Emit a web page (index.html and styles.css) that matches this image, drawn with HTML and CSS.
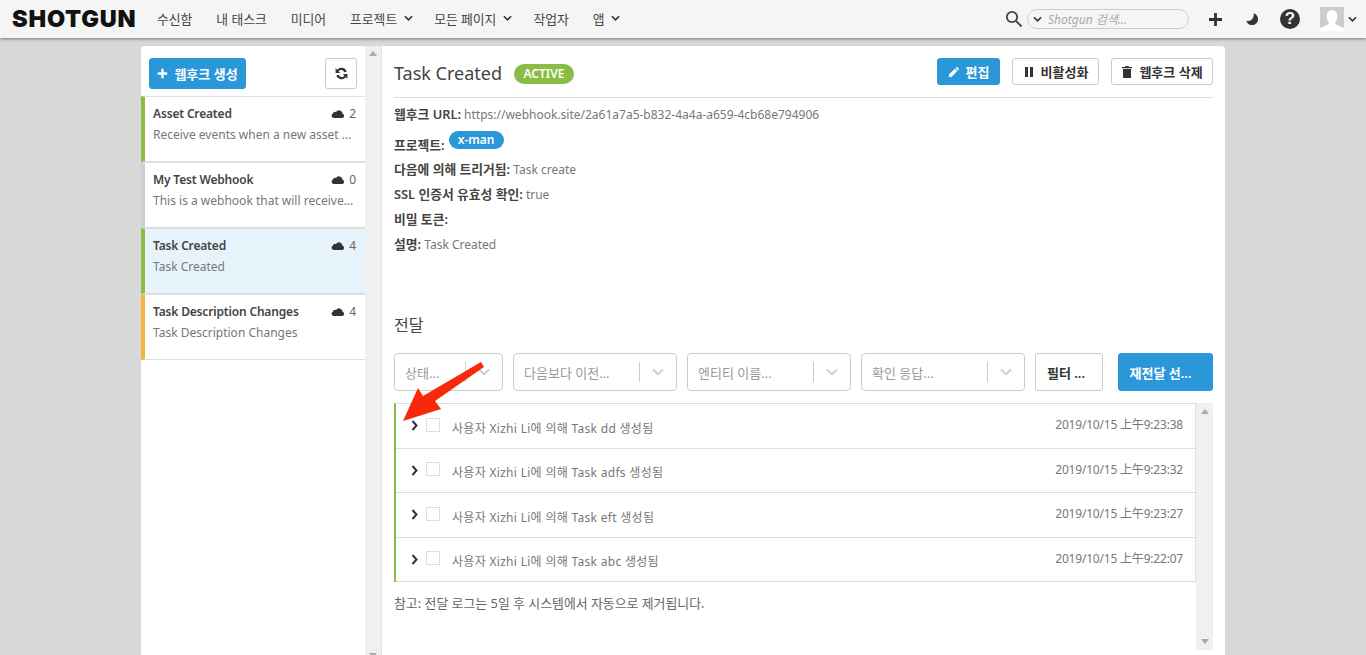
FILE: index.html
```html
<!DOCTYPE html>
<html lang="ko">
<head>
    <meta charset="UTF-8">
    <meta name="viewport" content="width=device-width, initial-scale=1.0">
    <title>Webhooks</title>
    <link rel="stylesheet" href="styles.css">
</head>
<body>
    <header class="topbar">
        <div class="logo">SHOTGUN</div>
        <nav class="nav">
            <a>수신함</a>
            <a>내 태스크</a>
            <a>미디어</a>
            <a>프로젝트<svg class="chev" viewBox="0 0 10 7"><path d="M1 1l4 4 4-4"/></svg></a>
            <a>모든 페이지<svg class="chev" viewBox="0 0 10 7"><path d="M1 1l4 4 4-4"/></svg></a>
            <a>작업자</a>
            <a>앱<svg class="chev" viewBox="0 0 10 7"><path d="M1 1l4 4 4-4"/></svg></a>
        </nav>
        <div class="tools">
            <svg class="search-icon" viewBox="0 0 18 18"><circle cx="7" cy="7" r="5.2"/><path d="M11 11l5.5 5.5"/></svg>
            <div class="search">
                <svg class="chev" viewBox="0 0 10 7"><path d="M1 1l4 4 4-4"/></svg>
                <span>Shotgun 검색...</span>
            </div>
            <svg class="plus-icon" viewBox="0 0 14 14"><path d="M5.500 0h3v5.500H14v3H8.500V14h-3V8.500H0v-3h5.500z"/></svg>
            <svg class="moon-icon" viewBox="0 0 12 12"><path d="M7.500 0.300A6 6 0 1 1 0.300 7.800 6 6 0 0 0 7.500 0.300z"/></svg>
            <div class="help">?</div>
            <div class="avatar">
                <svg viewBox="0 0 24 24"><path d="M0 24v-3l7-3c1.500-.7 2-1.700 1.500-3C7 13 6.500 10 6.800 7.500 7.200 4.500 9.500 3 12 3s4.800 1.500 5.200 4.500c.3 2.500-.2 5.500-1.700 7.500-.5 1.300 0 2.300 1.500 3l7 3v3z"/></svg>
            </div>
            <svg class="chev" viewBox="0 0 10 7"><path d="M1 1l4 4 4-4"/></svg>
        </div>
    </header>

    <div class="panel">
        <aside class="sidebar">
            <div class="side-top">
                <button class="btn btn-blue btn-create">
                    <svg class="ico-plus" viewBox="0 0 14 14"><path d="M5.500 1h3v4.500H13v3H8.500V13h-3V8.500H1v-3h4.500z"/></svg>
                    웹후크 생성
                </button>
                <button class="btn btn-refresh">
                    <svg viewBox="0 0 14 14"><path d="M11.800 5.300A5 5 0 0 0 3 3.600L1.500 2.200V6.500h4.300L4.300 5A3 3 0 0 1 9.600 5.800zM2.200 8.700A5 5 0 0 0 11 10.400l1.500 1.400V7.500H8.200L9.700 9A3 3 0 0 1 4.400 8.200z"/></svg>
                </button>
            </div>
            <div class="hook hook-green">
                <div class="hook-head"><b>Asset Created</b><span class="count"><svg class="cloud" viewBox="0 0 14 9"><use href="#cloud"/></svg>2</span></div>
                <div class="hook-desc">Receive events when a new asset ...</div>
            </div>
            <div class="hook hook-grey">
                <div class="hook-head"><b>My Test Webhook</b><span class="count"><svg class="cloud" viewBox="0 0 14 9"><use href="#cloud"/></svg>0</span></div>
                <div class="hook-desc">This is a webhook that will receive...</div>
            </div>
            <div class="hook hook-green selected">
                <div class="hook-head"><b>Task Created</b><span class="count"><svg class="cloud" viewBox="0 0 14 9"><use href="#cloud"/></svg>4</span></div>
                <div class="hook-desc">Task Created</div>
            </div>
            <div class="hook hook-yellow">
                <div class="hook-head"><b>Task Description Changes</b><span class="count"><svg class="cloud" viewBox="0 0 14 9"><use href="#cloud"/></svg>4</span></div>
                <div class="hook-desc">Task Description Changes</div>
            </div>
        </aside>
        <div class="scroll scroll-side">
            <span class="up"></span>
            <span class="down"></span>
        </div>

        <main class="main">
            <div class="title-row">
                <h1>Task Created</h1>
                <span class="badge">ACTIVE</span>
                <div class="actions">
                    <button class="btn btn-blue btn-edit">
                        <svg viewBox="0 0 12 12"><path d="M8.800 0.800l2.400 2.400-1.200 1.200-2.400-2.400zM6.900 2.700l2.400 2.400L3.400 11H1V8.600z"/></svg>
                        편집
                    </button>
                    <button class="btn btn-white btn-pause">
                        <svg viewBox="0 0 10 12"><path d="M1 1h3v10H1zM6 1h3v10H6z"/></svg>
                        비활성화
                    </button>
                    <button class="btn btn-white btn-delete">
                        <svg viewBox="0 0 10 12"><path d="M3.500 0h3l.5 1h3v1.300H0V1h3zM1 3h8v9H1z"/></svg>
                        웹후크 삭제
                    </button>
                </div>
            </div>

            <div class="info">
                <p><b>웹후크 URL:</b> https://webhook.site/2a61a7a5-b832-4a4a-a659-4cb68e794906</p>
                <p class="info-project"><b>프로젝트:</b> <span class="tag">x-man</span></p>
                <p><b>다음에 의해 트리거됨:</b> Task create</p>
                <p><b>SSL 인증서 유효성 확인:</b> true</p>
                <p><b>비밀 토큰:</b></p>
                <p><b>설명:</b> Task Created</p>
            </div>

            <h2>전달</h2>

            <div class="filters">
                <div class="select sel-status"><span>상태...</span><i></i><svg class="sel-chev" viewBox="0 0 14 8"><path d="M1 1l6 5.500L13 1"/></svg></div>
                <div class="select sel-wide"><span>다음보다 이전...</span><i></i><svg class="sel-chev" viewBox="0 0 14 8"><path d="M1 1l6 5.500L13 1"/></svg></div>
                <div class="select sel-wide"><span>엔티티 이름...</span><i></i><svg class="sel-chev" viewBox="0 0 14 8"><path d="M1 1l6 5.500L13 1"/></svg></div>
                <div class="select sel-wide"><span>확인 응답...</span><i></i><svg class="sel-chev" viewBox="0 0 14 8"><path d="M1 1l6 5.500L13 1"/></svg></div>
                <button class="btn btn-white btn-filter">필터 ...</button>
                <button class="btn btn-blue btn-resend">재전달 선...</button>
            </div>

            <div class="log-wrap">
                <div class="log-col">
                    <div class="log-list">
                        <div class="log-row">
                            <svg class="row-chev" viewBox="0 0 8 11"><path d="M1.500 1l4 4.500-4 4.500"/></svg>
                            <span class="check"></span>
                            <span class="row-text">사용자 Xizhi Li에 의해 Task dd 생성됨</span>
                            <span class="row-date">2019/10/15 上午9:23:38</span>
                        </div>
                        <div class="log-row">
                            <svg class="row-chev" viewBox="0 0 8 11"><path d="M1.500 1l4 4.500-4 4.500"/></svg>
                            <span class="check"></span>
                            <span class="row-text">사용자 Xizhi Li에 의해 Task adfs 생성됨</span>
                            <span class="row-date">2019/10/15 上午9:23:32</span>
                        </div>
                        <div class="log-row">
                            <svg class="row-chev" viewBox="0 0 8 11"><path d="M1.500 1l4 4.500-4 4.500"/></svg>
                            <span class="check"></span>
                            <span class="row-text">사용자 Xizhi Li에 의해 Task eft 생성됨</span>
                            <span class="row-date">2019/10/15 上午9:23:27</span>
                        </div>
                        <div class="log-row">
                            <svg class="row-chev" viewBox="0 0 8 11"><path d="M1.500 1l4 4.500-4 4.500"/></svg>
                            <span class="check"></span>
                            <span class="row-text">사용자 Xizhi Li에 의해 Task abc 생성됨</span>
                            <span class="row-date">2019/10/15 上午9:22:07</span>
                        </div>
                    </div>
                    <p class="note">참고: 전달 로그는 5일 후 시스템에서 자동으로 제거됩니다.</p>
                </div>
                <div class="scroll scroll-log">
                    <span class="up"></span>
                    <span class="down"></span>
                </div>
            </div>
        </main>
    </div>

    <!-- red annotation arrow on top of the screenshot -->
    <svg class="arrow" viewBox="0 0 90 66">
        <path d="M82 1L85 6 36 40 42 48 4 60 19 27 24 35z"/>
    </svg>

    <svg class="defs" width="0" height="0">
        <symbol id="cloud" viewBox="0 0 14 9"><path d="M2.500 9A2.300 2.300 0 0 1 2 4.600 2.200 2.200 0 0 1 5 3 3.600 3.600 0 0 1 11.600 4.800 2.200 2.200 0 0 1 11.500 9z"/></symbol>
    </svg>
</body>
</html>
```

FILE: styles.css
```css
html, body {
    height: 100%;
}

body {
    margin: 0;
    background-color: #d8d8d8;
    font-family: "Noto Sans", "Noto Sans CJK KR", sans-serif;
    font-size: 12px;
    color: #666;
    overflow: hidden;
}

/* top bar */
.topbar {
    display: flex;
    align-items: center;
    height: 38px;
    padding-left: 12px;
    background-color: #f5f5f5;
    box-shadow: 0 1px 3px rgba(0, 0, 0, 0.45);
    position: relative;
}

.logo {
    width: 124px;
    flex: none;
    margin-top: -2px;
    font-family: "Inter", sans-serif;
    font-size: 23.5px;
    font-weight: 900;
    letter-spacing: 0.8px;
    color: #111;
    margin-right: 21px;
}

.nav {
    display: flex;
    margin-top: -1px;
    font-size: 12.800px;
    color: #444;
}

.nav a {
    display: flex;
    align-items: center;
    gap: 7px;
    margin-right: 24px;
    white-space: nowrap;
}

.nav .chev {
    margin-right: -3px;
}

.chev {
    width: 9px;
    height: 7px;
    fill: none;
    stroke: #333;
    stroke-width: 1.8;
}

.tools {
    display: flex;
    align-items: center;
    margin-left: auto;
    padding-right: 9px;
}

.search-icon {
    width: 18px;
    height: 18px;
    fill: none;
    stroke: #444;
    stroke-width: 1.800;
    margin-right: 4px;
}

.search {
    display: flex;
    align-items: center;
    gap: 6px;
    box-sizing: border-box;
    width: 162px;
    height: 20px;
    padding-left: 5px;
    border: 1px solid #ccc;
    border-radius: 10px;
    font-size: 12px;
    font-style: italic;
    color: #aaa;
}

.plus-icon {
    width: 13px;
    height: 13px;
    fill: #333;
    margin-left: 20px;
}

.moon-icon {
    width: 12px;
    height: 12px;
    fill: #333;
    margin-left: 24px;
}

.help {
    width: 20px;
    height: 20px;
    margin-left: 22px;
    border-radius: 50%;
    background-color: #333;
    color: #f5f5f5;
    font-family: "Liberation Sans", sans-serif;
    font-size: 17px;
    font-weight: bold;
    line-height: 20px;
    text-align: center;
}

.avatar {
    width: 24px;
    height: 24px;
    margin-left: 20px;
    margin-right: 4px;
    background-color: #ccc;
}

.avatar svg {
    display: block;
    width: 24px;
    height: 24px;
    fill: #fff;
}

/* main panel */
.panel {
    display: flex;
    position: absolute;
    top: 46px;
    left: 141px;
    width: 1084px;
    height: 609px;
    background-color: #fff;
    border-radius: 4px 4px 0 0;
    overflow: hidden;
}

.sidebar {
    width: 224px;
    flex: none;
}

.side-top {
    display: flex;
    justify-content: space-between;
    height: 50px;
    padding: 12px 8px 0;
    box-sizing: border-box;
}

.btn {
    display: inline-flex;
    align-items: center;
    justify-content: center;
    box-sizing: border-box;
    border-radius: 3px;
    font-family: inherit;
    font-size: 13px;
    font-weight: 600;
    padding: 0;
    cursor: pointer;
}

.btn-blue {
    background-color: #2a97d8;
    border: 1px solid #2a97d8;
    color: #fff;
}

.btn-white {
    background-color: #fff;
    border: 1px solid #ccc;
    color: #333;
}

.btn-create {
    width: 97px;
    height: 31px;
    gap: 6px;
}

.ico-plus {
    width: 11px;
    height: 11px;
    fill: #fff;
}

.btn-refresh {
    width: 32px;
    height: 31px;
    background-color: #fff;
    border: 1px solid #ccc;
}

.btn-refresh svg {
    width: 15px;
    height: 15px;
    fill: #333;
}

.hook {
    box-sizing: border-box;
    height: 66px;
    padding: 8px 9px 0 8px;
    border-left: 4px solid #ccc;
    border-top: 1px solid #e0e0e0;
    border-bottom: 1px solid #ddd;
}

.hook-green {
    border-left-color: #8bbd45;
}

.hook-grey {
    border-left-color: #d0d0d0;
}

.hook-yellow {
    border-left-color: #f4b73c;
}

.selected {
    background-color: #e7f3fa;
}

.hook-head {
    display: flex;
    justify-content: space-between;
    align-items: center;
    height: 17px;
}

.hook-head b {
    color: #444;
    font-weight: 600;
    letter-spacing: -0.17px;
}

.count {
    display: flex;
    align-items: center;
    gap: 4px;
    color: #666;
}

.cloud {
    width: 14px;
    height: 9px;
    fill: #333;
}

.hook-desc {
    margin-top: 4px;
    line-height: 17px;
    color: #777;
    white-space: nowrap;
    overflow: hidden;
}

/* scroll strips */
.scroll {
    display: flex;
    flex-direction: column;
    justify-content: space-between;
    align-items: center;
    flex: none;
    background-color: #f0f0f0;
    box-sizing: border-box;
}

.scroll-side {
    width: 17px;
    padding: 5px 0 0;
    border-right: 1px solid #e2e2e2;
}

.scroll-side .down {
    margin-bottom: -3px;
}

.scroll-log {
    width: 17px;
    padding: 6px 0;
}

.up {
    width: 0;
    height: 0;
    border-left: 4px solid transparent;
    border-right: 4px solid transparent;
    border-bottom: 5px solid #aaa;
}

.down {
    width: 0;
    height: 0;
    border-left: 4px solid transparent;
    border-right: 4px solid transparent;
    border-top: 5px solid #aaa;
}

/* details */
.main {
    flex: 1;
    padding: 12px 12px 0 12px;
    min-width: 0;
}

.title-row {
    display: flex;
    align-items: center;
    padding-bottom: 8px;
    height: 31px;
    border-bottom: 1px solid #ddd;
}

h1 {
    margin: -2px 12px 0 0;
    font-size: 18px;
    font-weight: 400;
    color: #444;
}

.badge {
    padding: 0 9.500px;
    height: 20px;
    line-height: 20px;
    border-radius: 10px;
    background-color: #8bbd45;
    color: #fff;
    font-size: 12px;
    font-weight: 600;
}

.actions {
    display: flex;
    align-self: flex-start;
    gap: 12px;
    margin-left: auto;
}

.actions .btn {
    height: 27px;
    gap: 6px;
}

.actions svg {
    height: 12px;
    width: 12px;
}

.btn-edit {
    width: 63px;
}

.btn-edit svg {
    fill: #fff;
}

.btn-pause {
    width: 87px;
}

.btn-delete {
    width: 102px;
}

.btn-pause svg,
.btn-delete svg {
    fill: #333;
}

.info {
    margin-top: 6px;
}

.info p {
    margin: 0;
    height: 25px;
    line-height: 21px;
    color: #777;
    white-space: nowrap;
}

.info b {
    color: #444;
    font-size: 12.800px;
    font-weight: 600;
}

.info .info-project {
    height: 30px;
    line-height: 32px;
}

.tag {
    display: inline-block;
    vertical-align: 6px;
    height: 18px;
    margin-left: 1px;
    padding: 0 9px;
    line-height: 17px;
    border-radius: 9px;
    background-color: #2a97d8;
    color: #fff;
    font-weight: 600;
}

h2 {
    margin: 53px 0 0;
    height: 29px;
    font-size: 16px;
    font-weight: 400;
    color: #444;
}

.filters {
    display: flex;
    margin-top: 12px;
    height: 38px;
}

.select {
    display: flex;
    align-items: center;
    box-sizing: border-box;
    height: 38px;
    padding-left: 10px;
    border: 1px solid #ccc;
    border-radius: 4px;
    font-size: 13px;
    color: #999;
    margin-right: 10px;
    flex: none;
}

.select span {
    flex: 1;
}

.select i {
    width: 1px;
    height: 20px;
    background-color: #ccc;
}

.sel-chev {
    width: 12px;
    height: 8px;
    margin: 0 12px;
    fill: none;
    stroke: #ccc;
    stroke-width: 2.200;
}

.sel-status {
    width: 109px;
}

.sel-wide {
    width: 164px;
}

.btn-filter {
    width: 68px;
    height: 38px;
    margin-right: 15px;
    padding-right: 6px;
}

.btn-resend {
    width: 95px;
    height: 38px;
    padding-right: 10px;
}

.log-wrap {
    display: flex;
    margin-top: 12px;
    height: 247px;
}

.log-col {
    flex: 1;
    min-width: 0;
}

.log-list {
    border-top: 1px solid #ddd;
    border-left: 2px solid #8bbd45;
    border-right: 1px solid #ddd;
}

.log-row {
    display: flex;
    align-items: center;
    box-sizing: border-box;
    height: 44.500px;
    padding: 0 12px 0 15px;
    border-bottom: 1px solid #ddd;
}

.row-chev {
    width: 8px;
    height: 11px;
    fill: none;
    stroke: #333;
    stroke-width: 2;
}

.check {
    box-sizing: border-box;
    width: 14px;
    height: 14px;
    margin: -2px 0 0 7px;
    border: 1px solid #ddd;
}

.row-text {
    margin-left: 12px;
    color: #777;
    margin-top: 4px;
    letter-spacing: 0.3px;
}

.row-date {
    margin-left: auto;
    color: #777;
    margin-top: -3px;
    letter-spacing: -0.2px;
}

.note {
    margin: 11px 0 0;
    font-size: 12.900px;
    color: #666;
}

/* annotation */
.arrow {
    position: absolute;
    left: 399px;
    top: 361px;
    width: 90px;
    height: 66px;
    fill: #f62a0a;
}

.defs {
    position: absolute;
}
```
